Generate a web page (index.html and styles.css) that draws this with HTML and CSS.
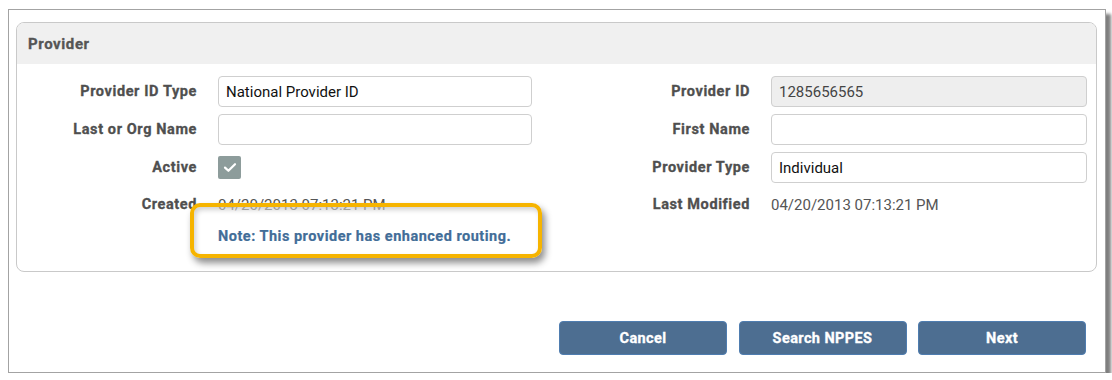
FILE: index.html
```html
<!DOCTYPE html>
<html>
<head>
<meta charset="utf-8">
<link rel="stylesheet" href="styles.css">
</head>
<body>
<div class="frame">
  <section class="panel">
    <div class="panel-head">Provider</div>
    <div class="form">
      <label class="lbl">Provider ID Type</label>
      <div class="field">National Provider ID</div>
      <label class="lbl">Provider ID</label>
      <div class="field readonly">1285656565</div>

      <label class="lbl">Last or Org Name</label>
      <div class="field"></div>
      <label class="lbl">First Name</label>
      <div class="field"></div>

      <label class="lbl">Active</label>
      <div class="check-cell">
        <span class="check"><svg width="14" height="11" viewBox="0 0 14 11"><path d="M2 5.6 L5.4 8.8 L12 2.2" fill="none" stroke="#fff" stroke-width="2.2" stroke-linecap="round" stroke-linejoin="round"/></svg></span>
      </div>
      <label class="lbl">Provider Type</label>
      <div class="field">Individual</div>

      <label class="lbl">Created</label>
      <div class="value">04/20/2013 07:13:21 PM</div>
      <label class="lbl">Last Modified</label>
      <div class="value">04/20/2013 07:13:21 PM</div>

      <div class="note">Note: This provider has enhanced routing.</div>
    </div>
    <div class="highlight"></div>
  </section>
  <div class="actions">
    <button class="btn">Cancel</button>
    <button class="btn">Search NPPES</button>
    <button class="btn">Next</button>
  </div>
</div>
</body>
</html>
```
FILE: styles.css
```css
* { box-sizing: border-box; }
html, body { background: #fff; }
body {
  margin: 9px 0 0 8px;
  font-family: Roboto, "Liberation Sans", Arial, sans-serif;
}
.frame {
  width: 1098px;
  height: 364px;
  border: 1px solid #a3a3a3;
  background: #fff;
  box-shadow: 5px 5px 3px rgba(0,0,0,0.5);
  padding: 12px 8px 16px 7px;
}
.panel {
  position: relative;
  border: 1px solid #c9c9c9;
  border-radius: 8px;
}
.panel-head {
  height: 41px;
  background: #f0f0f0;
  border-radius: 7px 7px 0 0;
  padding-left: 11px;
  display: flex;
  align-items: center;
  font-size: 15px;
  font-weight: 700;
  letter-spacing: 0.6px;
  -webkit-text-stroke: 0.3px #555;
  color: #555;
}
.form {
  display: grid;
  grid-template-columns: 180px 314px 1fr 316px;
  grid-template-rows: 31px 31px 31px 29px 20px;
  column-gap: 21px;
  row-gap: 7px;
  padding: 12px 9px 25px 0;
}
.lbl {
  display: flex;
  align-items: center;
  justify-content: flex-end;
  font-size: 14.5px;
  font-weight: 700;
  letter-spacing: 0.6px;
  -webkit-text-stroke: 0.3px #4f4f4f;
  color: #4f4f4f;
}
.field {
  border: 1px solid #cfcfcf;
  border-radius: 4px;
  display: flex;
  align-items: center;
  padding-left: 7px;
  font-size: 15px;
  color: #111;
  background: #fff;
}
.field.readonly {
  background: #eeeeee;
  color: #444;
}
.check-cell {
  display: flex;
  align-items: center;
}
.check {
  width: 23px;
  height: 23px;
  background: #8d9c9b;
  border-radius: 2px;
  display: flex;
  align-items: center;
  justify-content: center;
}
.value {
  display: flex;
  align-items: center;
  font-size: 15px;
  color: #555;
}
.note {
  grid-column: 2;
  position: relative;
  z-index: 2;
  display: flex;
  align-items: center;
  font-size: 14.5px;
  font-weight: 700;
  letter-spacing: 0.5px;
  -webkit-text-stroke: 0.2px #426d98;
  color: #426d98;
  white-space: nowrap;
}
.highlight {
  position: absolute;
  z-index: 1;
  left: 173px;
  top: 180px;
  width: 352px;
  height: 55px;
  border: 4px solid #f6b400;
  border-radius: 10px;
  background: rgba(255,255,255,0.55);
  box-shadow: 3px 5px 7px rgba(0,0,0,0.45), inset 2px 3px 5px rgba(0,0,0,0.18);
}
.actions {
  display: flex;
  justify-content: flex-end;
  gap: 11.5px;
  margin-top: 49px;
  padding-right: 11px;
}
.btn {
  width: 168px;
  height: 34px;
  border: 1px solid #4f7db0;
  border-radius: 4px;
  background: #4d6e91;
  color: #fff;
  font-family: Roboto, "Liberation Sans", Arial, sans-serif;
  font-size: 14.5px;
  font-weight: 700;
  letter-spacing: 0.4px;
  -webkit-text-stroke: 0.3px #fff;
  padding: 0;
}
```
